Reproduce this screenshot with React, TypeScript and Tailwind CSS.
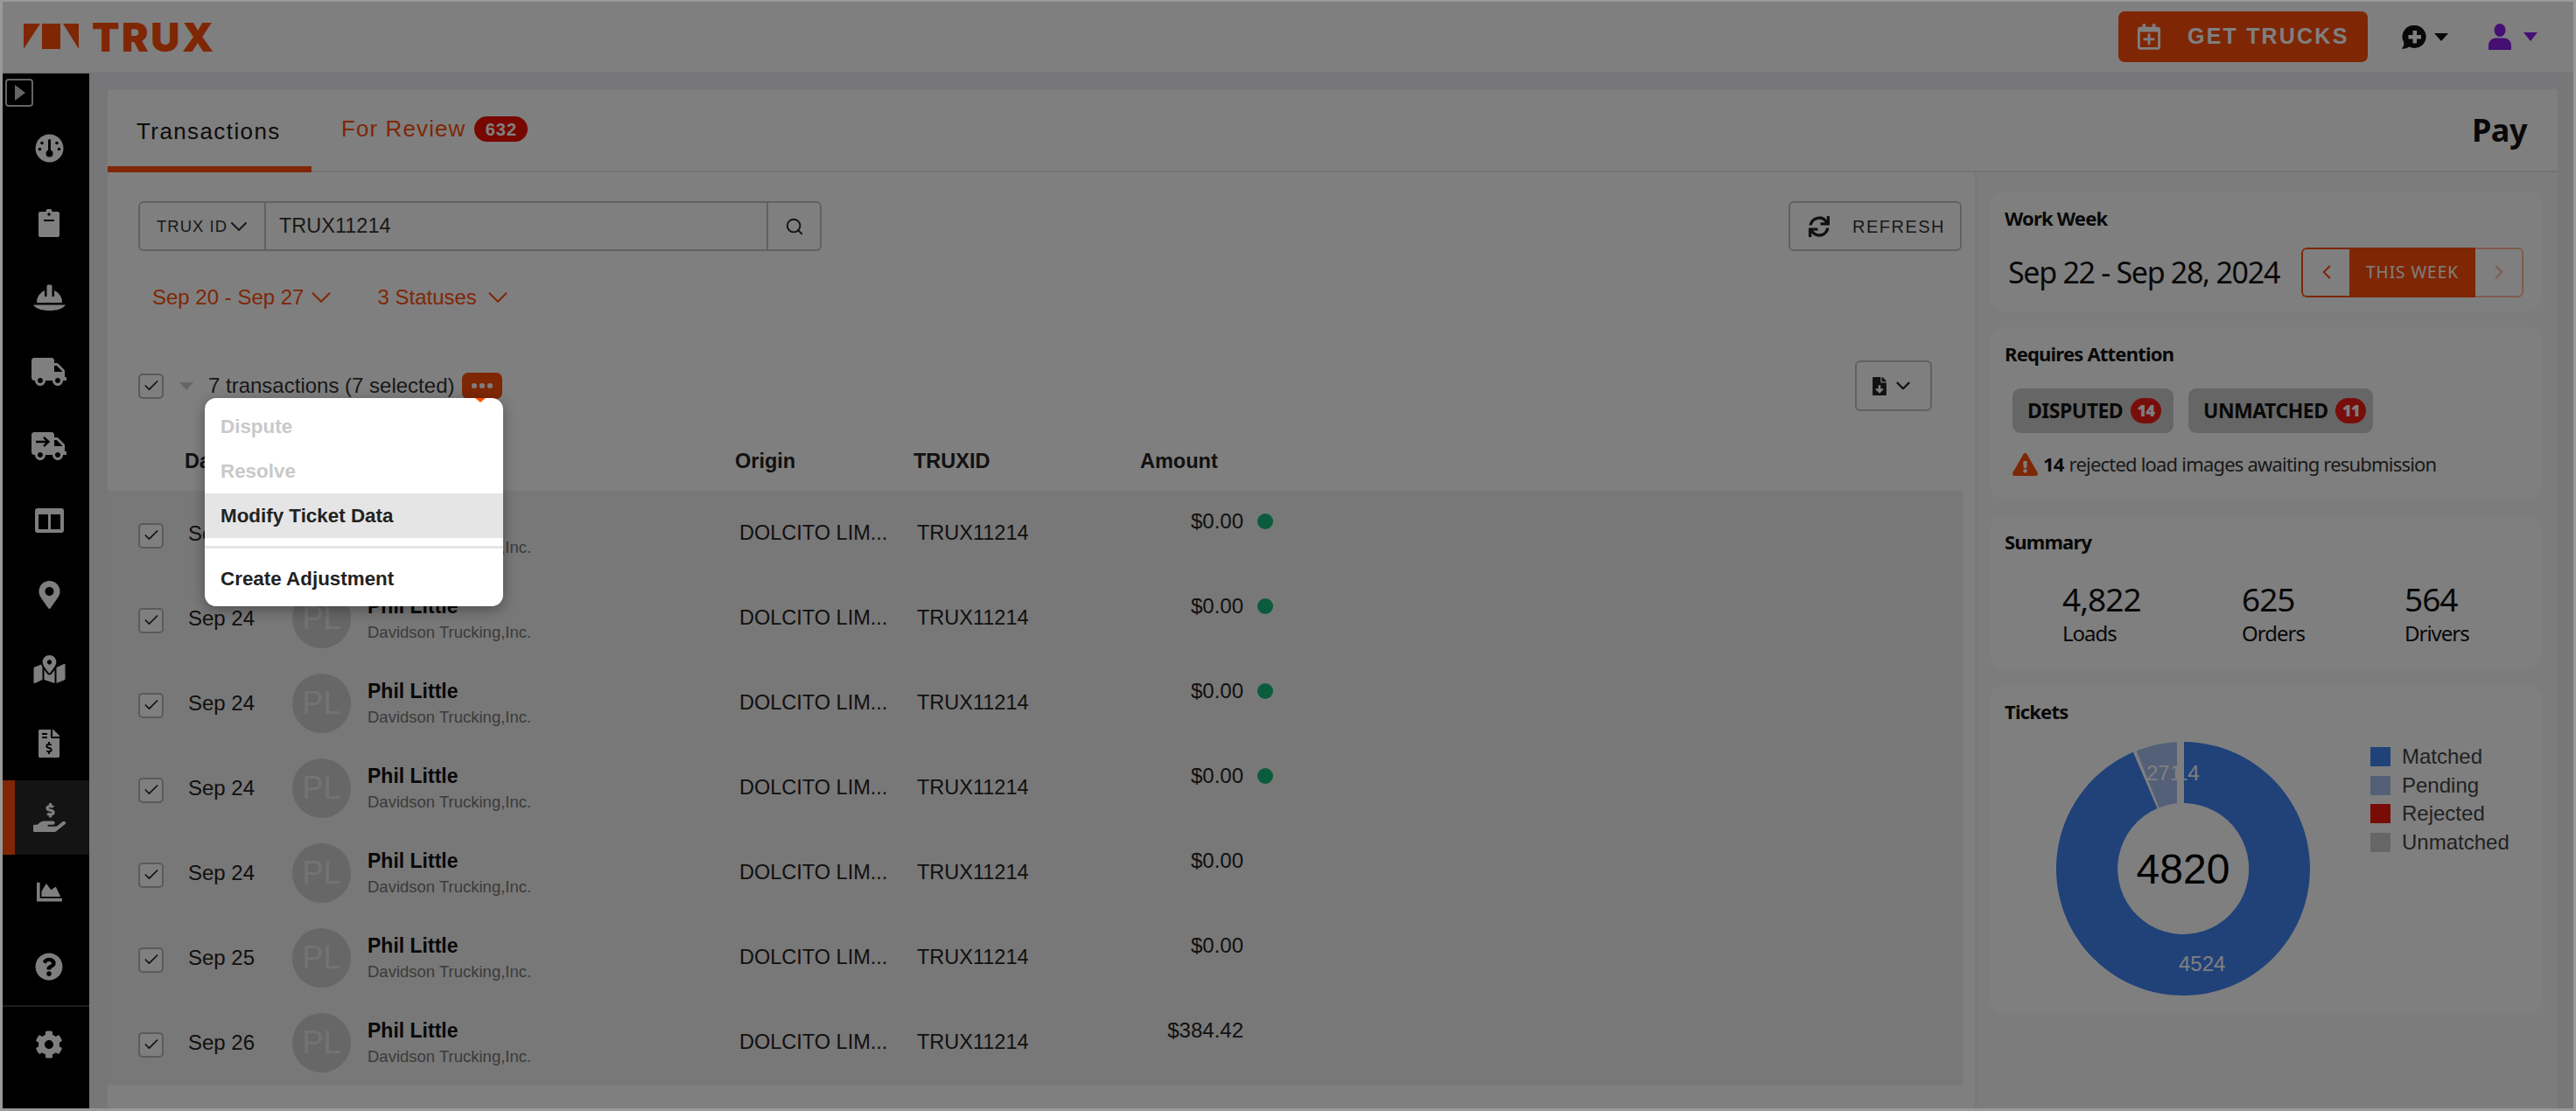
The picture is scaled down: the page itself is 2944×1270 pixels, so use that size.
import React from 'react';
import { Check, ChevronDown, ChevronLeft, ChevronRight, Search } from 'lucide-react';
import {
  FaTruck, FaMapMarkerAlt, FaMapMarkedAlt, FaFileInvoiceDollar, FaHandHoldingUsd,
  FaChartArea, FaQuestionCircle, FaCog, FaSync, FaFileDownload, FaRegCalendarPlus, FaExclamationTriangle,
} from 'react-icons/fa';

const Gauge = () => (
  <svg width="33" height="33" viewBox="0 0 33 33">
    <circle cx="16.5" cy="16.5" r="16" fill="#fff" />
    <g fill="#000">
      <circle cx="16.5" cy="22.5" r="4" />
      <rect x="15" y="6" width="3" height="16" rx="1.5" />
      <circle cx="8" cy="10.5" r="1.8" />
      <circle cx="25" cy="10.5" r="1.8" />
      <circle cx="5.5" cy="17.5" r="1.8" />
      <circle cx="27.5" cy="17.5" r="1.8" />
    </g>
  </svg>
);

const Clipboard = () => (
  <svg width="24" height="32" viewBox="0 0 24 32">
    <path d="M2 3h6.5a3.5 3.5 0 0 1 7 0H22a2 2 0 0 1 2 2v25a2 2 0 0 1-2 2H2a2 2 0 0 1-2-2V5a2 2 0 0 1 2-2z" fill="#fff" />
    <circle cx="12" cy="6" r="1.7" fill="#000" />
    <rect x="6" y="12" width="12" height="2" fill="#000" />
  </svg>
);

const Helmet = () => (
  <svg width="37" height="30" viewBox="0 0 37 30">
    <path d="M4 21a14.5 14.5 0 0 1 9-14V14h2.500V2a1.500 1.500 0 0 1 1.500-1.500h3A1.500 1.500 0 0 1 21.500 2v12H24V7a14.500 14.500 0 0 1 9 14z" fill="#fff" />
    <path d="M0 23.500h37C34 28 27 30 18.500 30S3 28 0 23.500z" fill="#fff" />
  </svg>
);

const TruckArrow = () => (
  <span className="relative block w-[40px] h-[32px]">
    <FaTruck className="text-white w-[40px] h-[32px]" />
    <svg className="absolute left-[4px] top-[4px]" width="18" height="14" viewBox="0 0 18 14">
      <path d="M1 7h14M10 2l5.5 5-5.5 5" stroke="#000" strokeWidth="2.4" fill="none" />
    </svg>
  </span>
);

const Split = () => (
  <svg width="33" height="28" viewBox="0 0 33 28">
    <path fillRule="evenodd" d="M3 0h27a3 3 0 0 1 3 3v22a3 3 0 0 1-3 3H3a3 3 0 0 1-3-3V3a3 3 0 0 1 3-3zM4 7v17h11V7zm14 0v17h11V7z" fill="#fff" />
  </svg>
);

const sideItems: { icon: React.ReactNode; active?: boolean }[] = [
  { icon: <Gauge /> },
  { icon: <Clipboard /> },
  { icon: <Helmet /> },
  { icon: <FaTruck className="text-white w-[40px] h-[32px]" /> },
  { icon: <TruckArrow /> },
  { icon: <Split /> },
  { icon: <FaMapMarkerAlt className="text-white w-[25px] h-[32px]" /> },
  { icon: <FaMapMarkedAlt className="text-white w-[37px] h-[32px]" /> },
  { icon: <FaFileInvoiceDollar className="text-white w-[24px] h-[32px]" /> },
  { icon: <FaHandHoldingUsd className="text-white w-[37px] h-[33px]" />, active: true },
  { icon: <FaChartArea className="text-white w-[33px] h-[29px]" /> },
  { icon: <FaQuestionCircle className="text-white w-[32px] h-[32px]" /> },
];

const rows = [
  { date: 'Sep 24', amount: '$0.00', dot: true },
  { date: 'Sep 24', amount: '$0.00', dot: true },
  { date: 'Sep 24', amount: '$0.00', dot: true },
  { date: 'Sep 24', amount: '$0.00', dot: true },
  { date: 'Sep 24', amount: '$0.00', dot: false },
  { date: 'Sep 25', amount: '$0.00', dot: false },
  { date: 'Sep 26', amount: '$384.42', dot: false },
];

const Box = () => (
  <span className="flex w-[29px] h-[29px] items-center justify-center rounded-[5px] border-2 border-[#b4b4b4] bg-white">
    <Check size={20} strokeWidth={2} className="text-[#222]" />
  </span>
);

const Sidebar = () => (
  <aside className="w-[99px] shrink-0 bg-black flex flex-col">
    <div className="h-[43px] pl-[3px] pt-[6px]">
      <span className="flex w-[32px] h-[32px] items-center justify-center rounded-[4px] border-2 border-[#c8c8c8]">
        <span className="w-0 h-0 border-y-[9px] border-y-transparent border-l-[12px] border-l-[#c8c8c8] ml-[2px]" />
      </span>
    </div>
    {sideItems.map((s, i) => (
      <div key={i} className={s.active ? 'h-[85px] flex items-center justify-center relative bg-[#282828] pl-[7px]' : 'h-[85px] flex items-center justify-center relative pl-[7px]'}>
        {s.active && <span className="absolute left-0 top-0 bottom-0 w-[14px] bg-[#ff4e0a]" />}
        <span className="flex items-center justify-center">{s.icon}</span>
      </div>
    ))}
    <div className="h-[2px] bg-[#3a3a3a] mt-[2px]" />
    <div className="h-[85px] flex items-center justify-center pl-[7px]">
      <FaCog className="text-white w-[32px] h-[32px]" />
    </div>
  </aside>
);

const Header = () => (
  <header className="h-[80px] shrink-0 bg-white flex items-center pl-[24px]">
    <svg width="63" height="30" viewBox="0 0 63 30" className="mr-[15px] shrink-0">
      <path d="M0 0h19L0 29zM21 0h21v29H21zM45 0h18v29z" fill="#ff4e0a" />
    </svg>
    <span className="font-['Inter',sans-serif] font-black text-[46px] leading-none tracking-[2.500px] text-[#ff4e0a]">TRUX</span>
    <div className="ml-auto flex items-center">
      <button className="w-[285px] h-[58px] rounded-[7px] bg-[#ff4e0a] flex items-center pl-[22px] text-white">
        <FaRegCalendarPlus className="w-[26px] h-[30px]" />
        <span className="ml-[31px] text-[25px] font-bold tracking-[2.200px]">GET TRUCKS</span>
      </button>
      <svg width="30" height="27" viewBox="0 0 30 27" className="ml-[38px]">
        <path fillRule="evenodd" d="M15.5 0a13 13 0 1 1-6 24.5C7 26 4 27 .5 26.500 3 25 3.500 22.500 3.300 19.500A13 13 0 0 1 15.500 0zM13.500 6v5h-5v4.500h5v5H18v-5h5V11h-5V6z" fill="#111" />
      </svg>
      <span className="ml-[8px] w-0 h-0 border-x-[8px] border-x-transparent border-t-[9px] border-t-[#111]" />
      <svg width="26" height="30" viewBox="0 0 26 30" className="ml-[46px]">
        <ellipse cx="13" cy="7.500" rx="6.500" ry="7.500" fill="#8a1ee8" />
        <path d="M0 30v-5c0-5 4-8.500 8-8.500h10c4 0 8 3.500 8 8.500v5z" fill="#8a1ee8" />
      </svg>
      <span className="ml-[14px] w-0 h-0 border-x-[8px] border-x-transparent border-t-[10px] border-t-[#8a1ee8] mr-[41px]" />
    </div>
  </header>
);

const TableRow = ({ date, amount, dot }: { date: string; amount: string; dot: boolean }) => (
  <div className="h-[97px] flex items-center pl-[35px] text-[24px] text-[#222]">
    <span className="w-[57px] pt-[5px]"><Box /></span>
    <span className="w-[119px]">{date}</span>
    <span className="w-[67px] h-[68px] rounded-full bg-[#cfcfcf] flex items-center justify-center text-[#e6e6e6] text-[36px] mr-[19px]">PL</span>
    <div className="w-[425px] flex flex-col">
      <span className="text-[23px] font-bold text-[#111] leading-[26px]">Phil Little</span>
      <span className="text-[18.500px] text-[#777] leading-[22px] mt-[6px]">Davidson Trucking,Inc.</span>
    </div>
    <span className="w-[203px] text-[23.500px]">DOLCITO LIM...</span>
    <span className="w-[190px] text-[23.500px]">TRUX11214</span>
    <div className="w-[183px] flex justify-end pb-[27px]">{amount}</div>
    {dot && <span className="ml-[16px] mb-[27px] w-[18px] h-[18px] rounded-full bg-[#14b87a]" />}
  </div>
);

const LeftColumn = () => (
  <div className="w-[2134px] shrink-0 flex flex-col">
    <div className="flex justify-between pl-[35px] pr-[15px] pt-[33px]">
      <div className="w-[781px] h-[57px] flex rounded-[6px] border-2 border-[#c2c2c8] text-[#333]">
        <div className="w-[144px] border-r-2 border-[#c2c2c8] flex items-center pl-[19px] text-[18.500px] tracking-[1px]">
          TRUX ID<ChevronDown size={32} strokeWidth={1.500} className="-ml-[3px]" />
        </div>
        <div className="flex-1 flex items-center pl-[15px] text-[23.500px]">TRUX11214</div>
        <div className="w-[61px] border-l-2 border-[#c2c2c8] flex items-center justify-center">
          <Search size={22} strokeWidth={2} className="text-[#222]" />
        </div>
      </div>
      <button className="w-[198px] h-[57px] rounded-[6px] border-2 border-[#c2c2c8] flex items-center pl-[21px] text-[#333]">
        <FaSync className="w-[24px] h-[24px] text-[#222]" />
        <span className="ml-[26px] text-[20px] tracking-[1.500px]">REFRESH</span>
      </button>
    </div>
    <div className="h-[48px] mt-[29px] flex items-center pl-[51px] text-[24px] text-[#ff4e0a]">
      <span>Sep 20 - Sep 27</span>
      <ChevronDown size={38} strokeWidth={1.300} className="ml-[1px]" />
      <span className="ml-[45px]">3 Statuses</span>
      <ChevronDown size={38} strokeWidth={1.300} className="ml-[5px]" />
    </div>
    <div className="h-[58px] mt-[48px] flex items-center pl-[35px] pr-[49px]">
      <Box />
      <span className="ml-[18px] w-0 h-0 border-x-[8px] border-x-transparent border-t-[9px] border-t-[#ccc]" />
      <span className="ml-[17px] text-[24px] text-[#333]">7 transactions (7 selected)</span>
      <span className="ml-[9px] w-[46px] h-[30px] rounded-[7px] bg-[#ff4e0a] flex items-center justify-center gap-[3px]">
        <i className="w-[6px] h-[6px] rounded-full bg-white" />
        <i className="w-[6px] h-[6px] rounded-full bg-white" />
        <i className="w-[6px] h-[6px] rounded-full bg-white" />
      </span>
      <button className="ml-auto w-[88px] h-[58px] rounded-[6px] border-2 border-[#c2c2c8] flex items-center justify-center gap-[6px] text-[#222]">
        <FaFileDownload className="w-[16px] h-[21px]" />
        <ChevronDown size={26} strokeWidth={2.200} />
      </button>
    </div>
    <div className="h-[91px] relative text-[23.500px] font-bold text-[#222] flex items-start pt-[40px] pl-[88px]">
      <span className="w-[629px]">Date</span>
      <span className="w-[204px]">Origin</span>
      <span className="w-[259px]">TRUXID</span>
      <span>Amount</span>
    </div>
    <div className="w-[2120px] bg-[#f0f0f0]">
      {rows.map((r, i) => <TableRow key={i} {...r} />)}
    </div>
  </div>
);

const Card = ({ title, h, children }: { title: string; h: string; children: React.ReactNode }) => (
  <section className={`${h} rounded-[18px] bg-white px-[17px] pt-[14px] font-['Noto_Sans',sans-serif] text-[#111]`}>
    <h3 className="text-[22px] leading-[32px] font-bold tracking-[-0.8px]">{title}</h3>
    {children}
  </section>
);

const Pill = ({ label, n, w }: { label: string; n: string; w: string }) => (
  <span className={`${w} h-[51px] rounded-[9px] bg-[#cdcdcd] flex items-center pl-[17px] text-[23px] font-bold tracking-[-0.500px] text-[#111]`}>
    {label}
    <b className="ml-[9px] w-[35px] h-[29px] rounded-full bg-[#f01c14] text-white text-[18px] flex items-center justify-center tracking-[-0.500px]">{n}</b>
  </span>
);

const Stat = ({ v, l, w }: { v: string; l: string; w: string }) => (
  <div className={`${w} flex flex-col`}>
    <span className="text-[37px] leading-[46px] tracking-[-1px]">{v}</span>
    <span className="text-[24px] leading-[32px] tracking-[-1px]">{l}</span>
  </div>
);

const Legend = ({ c, t }: { c: string; t: string }) => (
  <div className="h-[32.500px] flex items-center text-[24px] text-[#444] font-['Liberation_Sans',sans-serif]">
    <span className={`${c} w-[23px] h-[22px] mr-[13px]`} />
    {t}
  </div>
);

const Pie = () => (
  <svg width="290" height="290" viewBox="0 0 290 290" className="shrink-0 font-['Liberation_Sans',sans-serif]">
    <path d="M146 0A145 145 0 1 1 87.900 11.700L115.500 76.100A75 75 0 1 0 146 70Z" fill="#4084f2" />
    <path d="M91.600 10.200A145 145 0 0 1 138 0.200V70.300A75 75 0 0 0 117.400 75.300Z" fill="#a8c0ef" />
    <text x="103" y="44" fontSize="24" fill="#fff">271</text>
    <text x="137" y="44" fontSize="24" fill="#fff">14</text>
    <text x="140" y="262" fontSize="24" fill="#fff">4524</text>
    <text x="145" y="162" fontSize="48" fill="#000" textAnchor="middle">4820</text>
  </svg>
);

const RightPanel = () => (
  <div className="flex-1 bg-[#f8f8f8] border-l-2 border-[#f0f0f0] pl-[15px] pr-[18px] pt-[22px] flex flex-col gap-[18px]">
    <Card title="Work Week" h="h-[137px]">
      <div className="flex items-center justify-between mt-[17px] pl-[4px] pr-[4px]">
        <span className="text-[34px] tracking-[-1.300px] leading-[58px]">Sep 22 - Sep 28, 2024</span>
        <div className="flex h-[57px] w-[254px] rounded-[6px] overflow-hidden">
          <span className="w-[55px] border-2 border-r-0 border-[#ff4e0a] rounded-l-[6px] flex items-center justify-center text-[#ff4e0a]"><ChevronLeft size={26} /></span>
          <span className="w-[144px] bg-[#ff4e0a] text-white flex items-center justify-center text-[19px] tracking-[1px]">THIS WEEK</span>
          <span className="w-[55px] border-2 border-l-0 border-[#ffb79c] rounded-r-[6px] flex items-center justify-center text-[#ffb79c]"><ChevronRight size={26} /></span>
        </div>
      </div>
    </Card>
    <Card title="Requires Attention" h="h-[197px]">
      <div className="flex gap-[17px] mt-[24px] ml-[9px]">
        <Pill label="DISPUTED" n="14" w="w-[184px]" />
        <Pill label="UNMATCHED" n="11" w="w-[211px]" />
      </div>
      <div className="flex items-center mt-[19px] ml-[9px] text-[22px] tracking-[-0.800px] text-[#333]">
        <FaExclamationTriangle className="w-[29px] h-[26px] text-[#ff4e0a] mr-[6px]" />
        <b className="mr-[6px] text-[#111]">14</b> rejected load images awaiting resubmission
      </div>
    </Card>
    <Card title="Summary" h="h-[176px]">
      <div className="flex mt-[27px] ml-[66px]">
        <Stat v="4,822" l="Loads" w="w-[205px]" />
        <Stat v="625" l="Orders" w="w-[186px]" />
        <Stat v="564" l="Drivers" w="w-[80px]" />
      </div>
    </Card>
    <Card title="Tickets" h="h-[377px]">
      <div className="flex mt-[19px] ml-[59px]">
        <Pie />
        <div className="ml-[69px] pt-[1px]">
          <Legend c="bg-[#4084f2]" t="Matched" />
          <Legend c="bg-[#a8c0ef]" t="Pending" />
          <Legend c="bg-[#f0180e]" t="Rejected" />
          <Legend c="bg-[#cdcdcd]" t="Unmatched" />
        </div>
      </div>
    </Card>
  </div>
);

const Menu = () => (
  <div className="absolute left-[231px] top-[453px] w-[341px] h-[238px] rounded-[13px] bg-white shadow-[0_4px_16px_rgba(0,0,0,0.35)] pt-[7px] text-[22.400px] font-bold text-[#222]">
    <span className="absolute left-[309px] top-0 w-0 h-0 border-x-[6px] border-x-transparent border-t-[5px] border-t-[#ff5200]" />
    <div className="h-[51px] flex items-center pl-[18px] text-[#c9c9c9]">Dispute</div>
    <div className="h-[51px] flex items-center pl-[18px] text-[#c9c9c9]">Resolve</div>
    <div className="h-[51px] flex items-center pl-[18px] bg-[#e5e5e5]">Modify Ticket Data</div>
    <div className="h-[3px] bg-[#e5e5e5] mt-[9px] mb-[9px]" />
    <div className="h-[51px] flex items-center pl-[18px]">Create Adjustment</div>
  </div>
);

export default function App() {
  return (
    <div className="w-[2944px] h-[1270px] bg-[#999999] pl-[3px] pr-[3px] pt-[2px] pb-[3px] overflow-hidden font-['Liberation_Sans',sans-serif]">
      <div className="relative w-full h-full flex flex-col bg-white">
        <Header />
        <div className="h-[2px] bg-[#eeeef4]" />
        <div className="flex-1 flex min-h-0">
          <Sidebar />
          <main className="flex-1 bg-[#eeeef4] pl-[21px] pr-[18px] pt-[18px] min-w-0">
            <div className="h-full rounded-t-[4px] bg-white flex flex-col">
              <div className="h-[93px] flex items-end pr-[35px] border-b-2 border-[#e6e6e6] shrink-0 box-content">
                <div className="w-[233px] h-[93px] border-b-[7px] border-[#ff4e0a] -mb-[2px] flex items-start pt-[27px] pl-[33px] text-[26px] tracking-[1.400px] text-[#181818]">
                  Transactions
                </div>
                <div className="h-[93px] flex items-center pb-[2px] pl-[34px] text-[26px] tracking-[1.100px] text-[#ff4e0a]">
                  For Review
                  <span className="ml-[10px] w-[61px] h-[29px] rounded-full bg-[#f00f00] text-white text-[20px] font-bold flex items-center justify-center">632</span>
                </div>
                <span className="ml-auto self-center font-['Noto_Sans',sans-serif] text-[36px] font-bold tracking-[-0.500px] text-[#111]">Pay</span>
              </div>
              <div className="flex-1 flex min-h-0">
                <LeftColumn />
                <RightPanel />
              </div>
            </div>
          </main>
        </div>
        <div className="absolute inset-0 bg-black/50" />
        <Menu />
      </div>
    </div>
  );
}
